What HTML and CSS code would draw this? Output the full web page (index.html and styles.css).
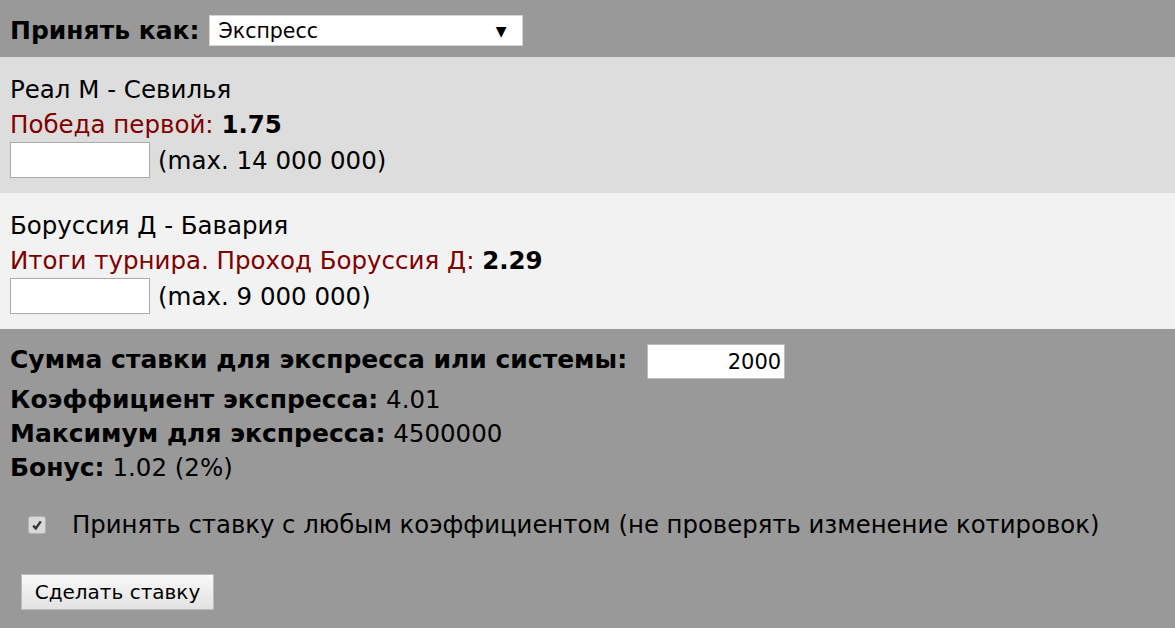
FILE: index.html
```html
<!DOCTYPE html>
<html>
<head>
  <title>Купон</title>
  <meta charset="UTF-8">
  <link rel="stylesheet" href="styles.css">
</head>
<body>
  <div class="coupon">
    <div class="accept-row">
      <b>Принять как:</b>
      <div class="select-box">
        <span>Экспресс</span>
        <span class="arrow">&#9660;</span>
      </div>
    </div>

    <div class="bet-item odd">
      <div class="event">Реал М - Севилья</div>
      <div class="outcome">Победа первой: <b class="coef">1.75</b></div>
      <div class="stake-row">
        <input type="text" class="stake-input">
        <span>(max. 14 000 000)</span>
      </div>
    </div>

    <div class="bet-item even">
      <div class="event">Боруссия Д - Бавария</div>
      <div class="outcome">Итоги турнира. Проход Боруссия Д: <b class="coef">2.29</b></div>
      <div class="stake-row">
        <input type="text" class="stake-input">
        <span>(max. 9 000 000)</span>
      </div>
    </div>

    <div class="summary">
      <div class="sum-row">
        <b>Сумма ставки для экспресса или системы:</b>
        <input type="text" class="sum-input" value="2000">
      </div>
      <div class="line"><b>Коэффициент экспресса:</b> 4.01</div>
      <div class="line"><b>Максимум для экспресса:</b> 4500000</div>
      <div class="line"><b>Бонус:</b> 1.02 (2%)</div>

      <label class="accept-any">
        <span class="check">
          <svg viewBox="0 0 12 12" width="12" height="12"><path d="M2.2 6.6 L4.8 9.4 L9.8 2.4" fill="none" stroke="#333" stroke-width="2.4"/></svg>
        </span>
        Принять ставку с любым коэффициентом (не проверять изменение котировок)
      </label>

      <button class="submit">Сделать ставку</button>
    </div>
  </div>
</body>
</html>
```

FILE: styles.css
```css
body {
  margin: 0;
  font-family: "DejaVu Sans", Verdana, sans-serif;
  font-size: 24.5px;
  color: #000;
  background-color: #999;
}
.coupon {
  display: flex;
  flex-direction: column;
}
.accept-row {
  display: flex;
  align-items: center;
  gap: 10px;
  height: 57px;
  padding: 4px 10px 0;
  box-sizing: border-box;
  background-color: #999;
}
.accept-row b {
  font-size: 25px;
}
.select-box {
  display: flex;
  justify-content: space-between;
  align-items: center;
  width: 314px;
  height: 31px;
  box-sizing: border-box;
  padding: 0 16px 0 8px;
  background-color: #fff;
  border: 1px solid #d4d4d4;
  font-size: 20.5px;
}
.arrow {
  font-size: 14px;
}
.bet-item {
  display: flex;
  flex-direction: column;
  padding: 15px 10px 15px;
  line-height: 35px;
}
.odd {
  background-color: #ddd;
}
.even {
  background-color: #f2f2f2;
}
.outcome {
  color: #800000;
}
.coef {
  color: #000;
}
.stake-row {
  display: flex;
  align-items: center;
  gap: 8px;
}
.stake-input {
  width: 140px;
  height: 36px;
  box-sizing: border-box;
  border: 1px solid #aaa;
  background: #fff;
  margin: 0;
}
.summary {
  display: flex;
  flex-direction: column;
  align-items: flex-start;
  padding: 15px 10px 19px;
  line-height: 34px;
}
.summary b {
  font-size: 25px;
}
.sum-row {
  display: flex;
  align-items: center;
  gap: 20px;
  margin-bottom: 4px;
}
.sum-row b {
  margin-top: -4px;
}
.sum-input {
  width: 138px;
  height: 35px;
  box-sizing: border-box;
  border: 1px solid #bbb;
  text-align: right;
  font-family: "DejaVu Sans", sans-serif;
  font-size: 21px;
  padding: 0 3px;
  margin: 0;
}
.accept-any {
  display: flex;
  align-items: center;
  gap: 26px;
  margin: 23px 0 0 18px;
  font-size: 24.35px;
}
.check {
  display: flex;
  align-items: center;
  justify-content: center;
  width: 16px;
  height: 16px;
  border: 1px solid #b4b4b4;
  border-radius: 3px;
  background-color: #d8d8d8;
}
.submit {
  margin: 32px 0 0 11px;
  width: 193px;
  height: 36px;
  border: 1px solid #bbb;
  background: linear-gradient(#f8f8f8, #e2e2e2);
  font-family: "DejaVu Sans", sans-serif;
  font-size: 20px;
  color: #000;
  padding: 0;
}
```
